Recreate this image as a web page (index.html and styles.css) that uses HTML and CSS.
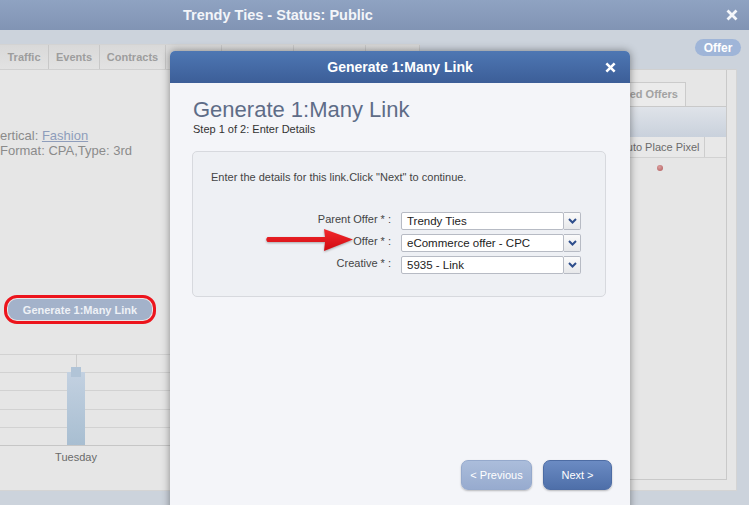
FILE: index.html
```html
<!DOCTYPE html>
<html>
<head>
<meta charset="utf-8">
<title>Trendy Ties - Status: Public</title>
<link rel="stylesheet" href="styles.css">
</head>
<body>
<header class="titlebar">
  <span class="title">Trendy Ties - Status: Public</span>
  <svg class="winclose" viewBox="0 0 12 12"><path d="M1.5 1.5L10.5 10.5M10.5 1.5L1.5 10.5"/></svg>
</header>
<div class="tabbar">
  <nav class="tabs">
    <span class="tab t1">Traffic</span>
    <span class="tab t2">Events</span>
    <span class="tab t3">Contracts</span>
    <span class="tab t4"></span>
    <span class="tab t5"></span>
    <span class="tab t6"></span>
    <span class="tab t7"></span>
  </nav>
  <span class="badge">Offer</span>
</div>
<main class="content">
  <section class="left">
    <p class="meta">ertical: <a class="link">Fashion</a></p>
    <p class="meta">Format: CPA,Type: 3rd</p>
    <div class="gen-ring"><button class="gen">Generate 1:Many Link</button></div>
    <div class="chart">
      <div class="grid"></div><div class="grid"></div><div class="grid"></div><div class="grid"></div><div class="grid"></div>
      <span class="whisker"></span>
      <span class="bar"></span>
      <span class="cap"></span>
    </div>
    <div class="xlabel">Tuesday</div>
  </section>
  <section class="panel">
    <div class="ptabs"><span class="ptab">Related Offers</span></div>
    <div class="pband"></div>
    <div class="phead"><span class="pc1"></span><span class="pc2">Auto Place Pixel</span><span class="pc3"></span></div>
    <div class="prow"><span class="pc1"></span><span class="pc2"><span class="dot"></span></span><span class="pc3"></span></div>
  </section>
</main>

<div class="modal">
  <div class="mhead">
    <span></span>
    <span class="mtitle">Generate 1:Many Link</span>
    <svg class="mclose" viewBox="0 0 12 12"><path d="M1.5 1.5L10.5 10.5M10.5 1.5L1.5 10.5"/></svg>
  </div>
  <div class="mbody">
    <h1 class="h1">Generate 1:Many Link</h1>
    <p class="step">Step 1 of 2: Enter Details</p>
    <div class="fieldset">
      <p class="intro">Enter the details for this link.Click "Next" to continue.</p>
      <div class="form">
        <label class="lbl">Parent Offer * :</label>
        <div class="sel"><span class="val">Trendy Ties</span><span class="dd"><svg viewBox="0 0 9 6"><path d="M1 1L4.5 4.5L8 1"/></svg></span></div>
        <label class="lbl">Offer * :</label>
        <div class="sel"><span class="val">eCommerce offer - CPC</span><span class="dd"><svg viewBox="0 0 9 6"><path d="M1 1L4.5 4.5L8 1"/></svg></span></div>
        <label class="lbl">Creative * :</label>
        <div class="sel"><span class="val">5935 - Link</span><span class="dd"><svg viewBox="0 0 9 6"><path d="M1 1L4.5 4.5L8 1"/></svg></span></div>
      </div>
      <svg class="arrow" viewBox="0 0 90 24">
        <defs><linearGradient id="ag" x1="0" y1="0" x2="0" y2="1"><stop offset="0" stop-color="#f22a2e"/><stop offset="1" stop-color="#d00a10"/></linearGradient></defs>
        <path d="M2.5 8L60 8L59 0L88 10.5L59 22L60 13L2.5 13Q0 10.5 2.5 8Z" fill="url(#ag)"/>
      </svg>
    </div>
  </div>
  <div class="mfoot">
    <button class="btn prev">&lt; Previous</button>
    <button class="btn next">Next &gt;</button>
  </div>
</div>
</body>
</html>
```
FILE: styles.css
```css
* { box-sizing: border-box; margin: 0; padding: 0; }
html, body { width: 749px; height: 505px; overflow: hidden; }
body {
  background: #ccd3dc;
  font-family: "Liberation Sans", Arial, Helvetica, sans-serif;
  position: relative;
}

/* window title bar */
.titlebar {
  height: 30px;
  background: linear-gradient(#8fa3c2, #8194b4);
  display: flex;
  align-items: center;
  padding-left: 183px;
  padding-right: 11px;
}
.title { flex: 1; color: #f3f5f9; font-weight: bold; font-size: 14.5px; }
.winclose { width: 12px; height: 12px; }
.winclose path { stroke: #f4f6fa; stroke-width: 2.8; fill: none; }

/* tabs */
.tabbar { height: 39px; padding-top: 14px; display: flex; position: relative; }
.tabs {
  display: flex;
  height: 25px;
  background: linear-gradient(#d9d9d9, #e2e2e2);
  border-top: 1px solid #d3d3d3;
}
.tab {
  border-right: 1px solid #c8c8c8;
  font-size: 11px;
  font-weight: bold;
  color: #9d9d9d;
  display: flex;
  align-items: center;
  justify-content: center;
}
.t1 { width: 49px; } .t2 { width: 51px; } .t3 { width: 66px; }
.t4 { width: 56px; } .t5 { width: 72px; } .t6 { width: 72px; } .t7 { width: 54px; }
.badge {
  position: absolute;
  left: 695px;
  top: 9px;
  width: 46px;
  height: 17px;
  border-radius: 9px;
  background: #9fb5d8;
  color: #fff;
  font-weight: bold;
  font-size: 12px;
  display: flex;
  align-items: center;
  justify-content: center;
}

/* main content */
.content {
  display: flex;
  width: 737px;
  height: 422px;
  background: #e6e6e6;
  border-top: 1px solid #d0d0d0;
  border-right: 1px solid #d4d4d4;
  border-bottom: 1px solid #d4d4d4;
}
.left { width: 560px; padding-top: 58px; }
.meta { font-size: 13px; line-height: 15px; color: #8b8b8b; white-space: nowrap; }
.link { color: #8e9dbb; text-decoration: underline; }
.gen-ring {
  margin: 137px 0 0 4px;
  width: 152px;
  height: 29px;
  border: 3px solid #ec141c;
  border-radius: 13px;
  padding: 1px;
}
.gen {
  display: block;
  width: 100%;
  height: 100%;
  border: none;
  border-radius: 9px;
  background: #a3b2ca;
  color: #eef1f6;
  font-family: inherit;
  font-weight: bold;
  font-size: 11px;
}
.chart {
  position: relative;
  margin-top: 30px;
  width: 560px;
  height: 92px;
  display: flex;
  flex-direction: column;
  border-bottom: 1px solid #c6c6c6;
}
.grid { flex: 1; border-top: 1px solid #d2d2d2; }
.whisker { position: absolute; left: 76px; top: 0; width: 1px; height: 14px; background: #cdcdcd; }
.bar {
  position: absolute;
  left: 67px; top: 18px; bottom: 0; width: 18px;
  background: linear-gradient(#c3d1e1, #a8bed1);
}
.cap { position: absolute; left: 71px; top: 13px; width: 10px; height: 10px; background: #b1c4d7; }
.xlabel { width: 44px; margin: 5px 0 0 54px; text-align: center; font-size: 11px; color: #6a6a6a; }

/* right panel */
.panel {
  flex: 1;
  margin: 0 9px 10px 0;
  border-right: 1px solid #c9c9c9;
  border-bottom: 1px solid #c9c9c9;
  display: flex;
  flex-direction: column;
}
.ptabs { height: 36px; padding-top: 12px; display: flex; }
.ptab {
  width: 100px;
  margin-left: 26px;
  height: 24px;
  border: 1px solid #cbcbcb;
  border-bottom: none;
  background: #ebebeb;
  font-size: 11px;
  font-weight: bold;
  color: #a2a2a2;
  text-align: right;
  padding: 5px 7px 0 0;
  white-space: nowrap;
}
.pband {
  height: 31px;
  border-top: 1px solid #c9c9c9;
  background: linear-gradient(#dfe3e9, #c9d1dc);
}
.phead, .prow { display: flex; }
.phead { height: 21px; background: #e8e8e8; border-bottom: 1px solid #d2d2d2; }
.prow { height: 20px; }
.pc1 { width: 55px; }
.pc2 {
  width: 90px;
  border-right: 1px solid #cdcdcd;
  font-size: 11px;
  color: #6b6b6b;
  display: flex;
  align-items: center;
  justify-content: center;
  white-space: nowrap;
}
.prow .pc2 { border-right: none; }
.pc3 { flex: 1; }
.dot {
  width: 6px; height: 6px; border-radius: 50%;
  background: radial-gradient(circle at 40% 35%, #dca0a0, #b05858);
}

/* modal */
.modal {
  position: absolute;
  left: 170px;
  top: 51px;
  width: 460px;
  height: 470px;
  background: #f4f5f9;
  border-radius: 5px 5px 0 0;
  box-shadow: 0 0 9px rgba(0, 0, 0, 0.42);
  display: flex;
  flex-direction: column;
}
.mhead {
  height: 32px;
  border-radius: 5px 5px 0 0;
  background: linear-gradient(#4e77b3, #3c5e98);
  display: grid;
  grid-template-columns: 1fr auto 1fr;
  align-items: center;
  padding: 0 14px;
}
.mtitle { color: #fff; font-weight: bold; font-size: 14px; }
.mclose { justify-self: end; width: 11px; height: 11px; }
.mclose path { stroke: #fff; stroke-width: 2.8; fill: none; }
.mbody { flex: 1; padding: 14px 24px 0 22px; }
.h1 { font-weight: normal; font-size: 22px; line-height: 26px; color: #5e6c87; padding-left: 1px; }
.step { font-size: 11px; line-height: 13px; color: #333; padding-left: 1px; }
.fieldset {
  position: relative;
  margin-top: 15px;
  height: 146px;
  border: 1px solid #d7d9de;
  border-radius: 5px;
  background: #eef0f4;
  padding: 19px 0 0 18px;
}
.intro { font-size: 11px; line-height: 13px; color: #444; }
.form {
  margin: 28px 0 0 -18px;
  display: grid;
  grid-template-columns: 198px 180px;
  column-gap: 10px;
  row-gap: 4px;
}
.lbl {
  font-size: 11px;
  color: #444;
  text-align: right;
  line-height: 14px;
}
.sel { display: flex; height: 18px; }
.val {
  width: 163px;
  height: 18px;
  background: #fff;
  border: 1px solid #b7bbc4;
  border-radius: 2px;
  font-size: 11.5px;
  line-height: 16px;
  color: #222;
  padding-left: 5px;
}
.dd {
  width: 17px;
  height: 18px;
  border: 1px solid #b7bbc4;
  border-left: none;
  border-radius: 0 2px 2px 0;
  background: linear-gradient(#fbfbfb, #e7e8ea);
  display: flex;
  align-items: center;
  justify-content: center;
}
.dd svg { width: 9px; height: 6px; }
.dd path { stroke: #2e4e8c; stroke-width: 2; fill: none; }
.arrow {
  position: absolute;
  left: 72px;
  top: 77px;
  width: 90px;
  height: 24px;
  filter: drop-shadow(0 1px 1px rgba(0, 0, 0, 0.3));
}
.mfoot {
  display: flex;
  justify-content: flex-end;
  gap: 11px;
  padding: 0 18px 31px 0;
}
.btn {
  height: 30px;
  border-radius: 7px;
  font-family: inherit;
  font-size: 11px;
  color: #fff;
  box-shadow: 0 1px 2px rgba(0, 0, 0, 0.25);
}
.prev {
  width: 71px;
  background: linear-gradient(#abbddb, #97abcf);
  border: 1px solid #95a9cc;
}
.next {
  width: 69px;
  background: linear-gradient(#6b8bc3, #4e6fa9);
  border: 1px solid #4d6ca4;
}
```
